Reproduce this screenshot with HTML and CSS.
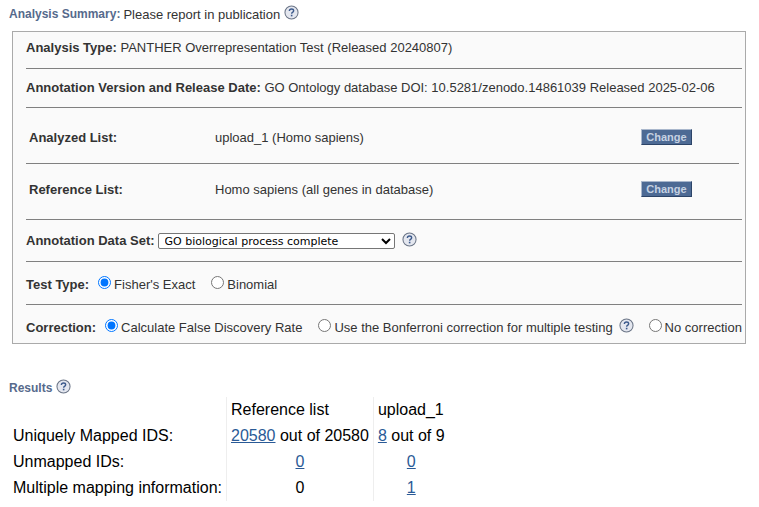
FILE: index.html
```html
<!DOCTYPE html>
<html lang="en">
<head>
<meta charset="utf-8">
<title>Analysis Summary</title>
<link rel="stylesheet" href="styles.css">
</head>
<body>
<main class="page">
  <h2 class="heading summary-heading"><span class="heading-label">Analysis Summary:</span> <span class="heading-note">Please report in publication</span>
    <svg class="help" viewBox="0 0 16 16"><use href="#q"/></svg></h2>
  <section class="panel">
    <div class="row row-type"><b>Analysis Type:</b> PANTHER Overrepresentation Test (Released 20240807)</div>
    <div class="row row-version"><b>Annotation Version and Release Date:</b> GO Ontology database DOI: 10.5281/zenodo.14861039 Released 2025-02-06</div>
    <div class="lists">
      <div class="list-row list-first">
        <b class="list-label">Analyzed List:</b><span class="list-value">upload_1 (Homo sapiens)</span><button class="change">Change</button>
      </div>
      <div class="list-row list-second">
        <b class="list-label">Reference List:</b><span class="list-value">Homo sapiens (all genes in database)</span><button class="change">Change</button>
      </div>
    </div>
    <div class="row row-set"><b>Annotation Data Set:</b>
      <select class="dataset"><option>GO biological process complete</option></select>
      <svg class="help help-set" viewBox="0 0 16 16"><use href="#q"/></svg>
    </div>
    <div class="row row-test"><b>Test Type:</b>
      <label class="choice"><input type="radio" name="test" checked>Fisher's Exact</label>
      <label class="choice"><input type="radio" name="test">Binomial</label>
    </div>
    <div class="row row-correction"><b>Correction:</b>
      <label class="choice"><input type="radio" name="corr" checked>Calculate False Discovery Rate</label>
      <label class="choice"><input type="radio" name="corr">Use the Bonferroni correction for multiple testing</label>
      <svg class="help help-corr" viewBox="0 0 16 16"><use href="#q"/></svg>
      <label class="choice"><input type="radio" name="corr">No correction</label>
    </div>
  </section>
  <h2 class="heading results-heading"><span class="heading-label">Results</span>
    <svg class="help" viewBox="0 0 16 16"><use href="#q"/></svg></h2>
  <table class="results">
    <tr><td></td><td class="col">Reference list</td><td class="col">upload_1</td></tr>
    <tr><td>Uniquely Mapped IDS:</td><td class="col"><a href="#">20580</a> out of 20580</td><td class="col"><a href="#">8</a> out of 9</td></tr>
    <tr><td>Unmapped IDs:</td><td class="col mid"><a href="#">0</a></td><td class="col mid"><a href="#">0</a></td></tr>
    <tr><td>Multiple mapping information:</td><td class="col mid">0</td><td class="col mid"><a href="#">1</a></td></tr>
  </table>
</main>
<svg class="defs" width="0" height="0" aria-hidden="true">
  <symbol id="q" viewBox="0 0 16 16">
    <circle cx="8" cy="8" r="7" fill="#e4e7ef" stroke="#6a7486" stroke-width="1.1"/>
    <path d="M5.7 6.4C5.8 5 6.7 4.2 8 4.2c1.3 0 2.3.8 2.3 1.9 0 .9-.6 1.4-1.2 1.8-.6.4-.9.8-.9 1.4" fill="none" stroke="#3c5a8c" stroke-width="1.5"/>
    <rect x="7.3" y="10.4" width="1.7" height="1.7" fill="#3c5a8c"/>
  </symbol>
</svg>
</body>
</html>
```
FILE: styles.css
```css
* { box-sizing: border-box; }
html, body { margin: 0; padding: 0; background: #fff; }
body { font-family: "Liberation Sans", Arial, sans-serif; font-size: 13px; color: #333; overflow: hidden; }
.page { width: 759px; height: 507px; padding: 5px 0 0 9px; }
.heading { margin: 0; font-size: 13px; font-weight: normal; display: flex; align-items: center; height: 18px; }
.heading-label { font-weight: bold; color: #566a8c; font-size: 12px; }
.heading-note { margin-left: 3px; }
.help { width: 15px; height: 15px; flex: none; }
.summary-heading .help { margin: -4px 0 0 4px; }
.panel { margin: 8px 0 0 3px; width: 734px; height: 313px; background: #fafafa; border: 1px solid #aaa; padding: 0 3px 0 13px; }
.row { border-bottom: 1px solid #808080; display: flex; align-items: center; white-space: pre-wrap; }
.row b { color: #333; }
.row-type { height: 37px; padding-bottom: 6px; }
.row-version { height: 39px; padding-bottom: 2px; }
.lists { display: flex; flex-direction: column; border-bottom: 1px solid #808080; }
.list-row { display: flex; align-items: center; height: 56px; margin-right: 3px; padding-left: 3px; border-bottom: 1px solid #808080; }
.list-first { padding-top: 4px; }
.list-first .change { margin-top: -2px; }
.list-second { border-bottom: 0; height: 55px; padding-bottom: 4px; }
.list-second .change { margin-top: -2px; }
.list-label { width: 186px; }
.list-value { width: 426px; }
.change { width: 51px; height: 16px; padding: 0; background: #4d6a94; color: #c5d1e2; border: 1px solid; border-color: #a9b7cc #2c4468 #2c4468 #a9b7cc; font: bold 11px "Liberation Sans", Arial, sans-serif; }
.row-set { height: 42px; }
.dataset { margin: 0 0 0 3px; width: 237px; height: 16px; padding: 0 0 0 2px; background: #fff; border: 1px solid #767676; border-radius: 2px; font: 11px "DejaVu Sans", sans-serif; color: #000; }
.help-set { margin: -3px 0 0 7px; }
.row-test { height: 43px; padding-top: 2px; }
.row-correction { height: 38px; border-bottom: 0; padding-top: 7px; }
.choice { display: inline-flex; align-items: center; margin-left: 9px; }
.row-test .choice + .choice { margin-left: 16px; }
.row-correction .choice + .choice { margin-left: 16px; }
.choice input { width: 13px; height: 13px; margin: -4px 3px 0 0; accent-color: #0075ff; }
.help-corr { margin: -5px 0 0 6px; }
.help-corr + .choice { margin-left: 15px; }
.results-heading { margin: 35px 0 0 0; }
.results-heading .help { margin: -4px 0 0 4px; }
.results { border-collapse: collapse; margin: 0; font-size: 16px; color: #000; }
.results td { padding: 0 4px; height: 26px; white-space: nowrap; }
.results td.col { border-left: 1px solid #eee; padding: 0 4px; }
.results .mid { text-align: center; }
.results a { color: #2a5a96; }
.defs { position: absolute; }
```
